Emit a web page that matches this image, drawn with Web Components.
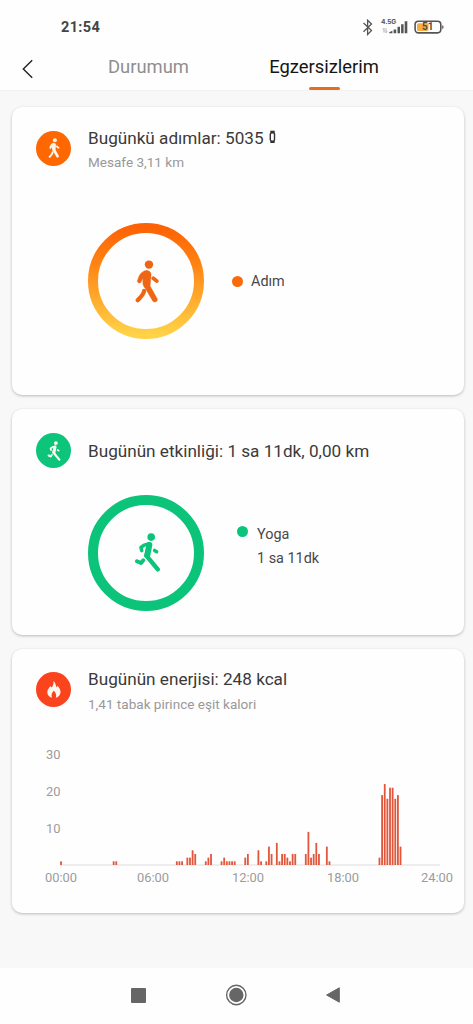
<!DOCTYPE html>
<html lang="tr">
<head>
<meta charset="utf-8">
<title>Egzersizlerim</title>
<style>
html,body{margin:0;height:100%;background:#f8f8f8}
body{font-family:Roboto,"Noto Sans",sans-serif;overflow:hidden}
</style>
</head>
<body>
<fit-app></fit-app>
<script>
const define = (name, html, setup) => customElements.define(name, class extends HTMLElement {
  constructor() {
    super();
    const t = document.createElement('template');
    t.innerHTML = html;
    this.attachShadow({mode: 'open'}).append(t.content.cloneNode(true));
  }
  connectedCallback() { if (setup) setup(this, this.shadowRoot); }
});

/* Activity figures, drawn in the current colour */
const FIGURES = {
  walk: `<svg viewBox="0 0 24 44" fill="none" stroke="currentColor" stroke-linecap="round" stroke-linejoin="round">
    <circle cx="14" cy="4.7" r="4.3" fill="currentColor" stroke="none"/>
    <path d="M11.5 10.8 C8.5 11 7 12.5 5 14.5 C3.8 16 3.3 18.5 2.2 21.2 C2 23.5 5 24.5 6 22.5 L7.7 18.5 L7.8 24 C8 26.5 9 27.5 10.5 29.5 L18 42.2 C19.5 44 23.5 42.4 22.6 39.8 L15.2 26.5 L16.2 15.5 C16.6 12.5 14 10.8 11.5 10.8Z" fill="currentColor" stroke="currentColor" stroke-width=".4"/>
    <path d="M18.4 18.7 L22.1 21.6" stroke-width="3.8"/>
    <path d="M9 31.5 C8.9 35 6.5 37 2.5 41.2" stroke-width="4.3" /></svg>`,
  run: `<svg viewBox="0 0 24 38" fill="none" stroke="currentColor" stroke-linecap="round" stroke-linejoin="round">
    <circle cx="15.6" cy="4" r="3.7" fill="currentColor" stroke="none"/>
    <path d="M14 11 L10.9 22 L22 35.4" stroke-width="4.3"/>
    <path d="M13.3 10.8 C10 11 8 11.7 5.6 14.2 L6.4 17.2" stroke-width="3.4"/>
    <path d="M13.8 11.6 L11.8 21.8" stroke-width="5.8"/>
    <path d="M18.9 17 L20.9 18.3" stroke-width="3.4"/>
    <path d="M1.7 27.5 L5.7 29.3 L7.9 26.5" stroke-width="3.8"/></svg>`,
  fire: `<svg viewBox="0 0 14 17"><path fill="currentColor" d="M6.5 0 C8.5 1.5 8.6 4 9.4 6.2 L10.6 4.8 C12.5 7 13.7 9 13.5 11.5 C13.2 14.5 11 16.3 8.8 16.7 C9.8 14.5 9 11.6 6.8 9.7 C4.8 11.5 3.9 14.5 5 16.7 C2.3 16 .3 14 .3 11.3 C.3 8.7 1.6 7.5 3.3 5.2 L4.8 6.6 C6.2 4.5 6.7 2.4 6.5 0Z"/></svg>`
};

define('fit-app', `
<style>
:host{display:flex;flex-direction:column;height:1024px;width:473px;background:#f8f8f8}
main{flex:1;display:flex;flex-direction:column;gap:14px;padding:16px 9px 0 12px}
</style>
<status-bar></status-bar>
<tab-bar></tab-bar>
<main>
  <info-card style="height:288px;--head:23.5px;--sub:6px" icon="walk" color="#ff6700">
    <span slot="title">Bugünkü adımlar: 5035</span><band-glyph slot="title"></band-glyph>
    <span slot="sub">Mesafe 3,11 km</span>
    <ring-chart figure="walk" style="--top:55px;color:#ee6513">
      <legend-item color="#fa6a0a" style="margin:2px 0 0 28px">Adım</legend-item>
    </ring-chart>
  </info-card>
  <info-card style="height:225.5px;--head:24px" icon="run" color="#0cc57a">
    <span slot="title">Bugünün etkinliği: 1 sa 11dk, 0,00 km</span>
    <ring-chart figure="run" style="--top:24.5px;color:#0bc47a">
      <legend-item color="#0bc47a" style="margin:-11px 0 0 33px">Yoga<span slot="value">1 sa 11dk</span></legend-item>
    </ring-chart>
  </info-card>
  <info-card style="height:264px;--head:23px;--sub:7px" icon="fire" color="#fb431e">
    <span slot="title">Bugünün enerjisi: 248 kcal</span>
    <span slot="sub">1,41 tabak pirince eşit kalori</span>
    <energy-chart></energy-chart>
  </info-card>
</main>
<nav-bar></nav-bar>`);

define('status-bar', `
<style>
:host{display:flex;justify-content:space-between;height:50px;background:#fefefe;padding:0 29px 0 61px;box-sizing:border-box}
time{font:700 14.5px/17px Roboto,sans-serif;color:#454545;letter-spacing:.35px;margin-top:19px}
.r{display:flex;align-items:flex-start;padding-top:19px}
svg{display:block}
.net{display:grid;margin:0 6px 0 7px;width:27px;height:16px}
.net>*{grid-area:1/1}
.net span{font:700 6.6px/7px Inter,Roboto,sans-serif;color:#555;white-space:nowrap;letter-spacing:-.1px}
.bat{display:grid;width:30px;height:16px}
.bat>*{grid-area:1/1}
.bat span{font:700 10px/16px Roboto,sans-serif;color:#564b3c;padding-left:8px;letter-spacing:-.1px}
</style>
<time>21:54</time>
<div class="r">
<svg width="12" height="17" viewBox="0 0 12 17" fill="none" stroke="#555" stroke-width="1.3"><path d="M1.5 4 L9.5 11.6 L5.6 15.5 V1.2 L9.5 5 L1.5 12.8"/></svg>
<div class="net"><svg width="27" height="16" viewBox="0 0 27 16"><path fill="#555" d="M8.2 14.3V13.2L11.4 11.7V14.3ZM12.6 14.3V10.5H15.2V14.3ZM16.5 14.3V7.8H19V14.3ZM20.1 14.3V5.2H22.6V14.3ZM23.7 14.3V2.3H26.3V14.3Z"/><path d="M3 9.3V13.5M1.8 10.6L3 9.3M5 9.3V13.7M6.2 12.4L5 13.7" stroke="#999" stroke-width=".8" fill="none"/></svg><span>4.5G</span></div>
<div class="bat"><svg width="30" height="16" viewBox="0 0 30 16"><rect x="1.1" y="2.3" width="25.7" height="11.6" rx="3.3" fill="#fff" stroke="#555" stroke-width="1.6"/><rect x="3" y="4.2" width="11.5" height="7.8" rx="1.5" fill="#f7ad43"/><path d="M28.2 6.3C30 6.5 30 9.7 28.2 10Z" fill="#555"/></svg><span>51</span></div>
</div>`);

define('tab-bar', `
<style>
:host{display:flex;height:41px;background:#fefefe;border-bottom:1px solid #f2f2f2;box-sizing:border-box;font-size:18.4px;line-height:22px;color:#8f8f8f}
svg{margin:9px 0 0 20px;width:16px;flex:none}
.a{margin:6px 0 0 72px;width:81px;white-space:nowrap}
.b{display:flex;flex-direction:column;align-items:center;margin:6px 0 0 80.5px;color:#151515;width:109px;white-space:nowrap}
i{width:31px;height:3px;border-radius:2px;background:#e76c20;margin-top:9px;flex:none}
</style>
<svg width="16" height="20" viewBox="0 0 16 20" fill="none" stroke="#222" stroke-width="1.4"><path d="M12.2 1.3 L3.3 10 L12.2 18.8"/></svg>
<span class="a">Durumum</span><span class="b"><span>Egzersizlerim</span><i></i></span>`);

define('info-card', `
<style>
:host{display:block;box-sizing:border-box;flex:none;background:#fefefe;border-radius:10px;box-shadow:0 1px 3px rgba(0,0,0,.25)}
header{display:flex;padding:var(--head) 0 0 24px;height:61px;box-sizing:border-box}
icon-disc{flex:none}
.t{margin-left:17px;color:#3a3a3a;white-space:nowrap}
.h{font-size:17.15px;line-height:20px;display:flex;align-items:center}
.s{font-size:13.55px;line-height:16px;color:#999;margin-top:var(--sub)}
</style>
<header><icon-disc></icon-disc><div class="t"><div class="h"><slot name="title"></slot></div><div class="s"><slot name="sub"></slot></div></div></header>
<slot></slot>`, (el, r) => {
  const d = r.querySelector('icon-disc');
  d.setAttribute('icon', el.getAttribute('icon'));
  d.style.background = el.getAttribute('color');
  const sub = el.querySelector('[slot=sub]');
  r.querySelector('.t').style.marginTop = sub ? '-3px' : '8px';
});

customElements.define('icon-disc', class extends HTMLElement {
  static observedAttributes = ['icon'];
  constructor() { super(); this.attachShadow({mode: 'open'}); }
  attributeChangedCallback(_, __, icon) {
    this.shadowRoot.innerHTML = `<style>
      :host{display:grid;place-items:center;width:35px;height:35px;border-radius:50%;color:#fff8ef}
      svg{display:block;width:14px;height:${icon === 'fire' ? 17 : 20}px}
    </style>${FIGURES[icon] || ''}`;
  }
});

define('band-glyph', `
<style>:host{display:block;margin:-2px 0 0 5px}svg{display:block}</style>
<svg width="7" height="14" viewBox="0 0 7 14"><path d="M1.3 .7H5.7V13H1.3Z" fill="#333"/><rect x=".6" y="2.6" width="5.6" height="8.6" rx="1.6" fill="#333"/><rect x="2" y="3.4" width="2.8" height="7" rx="1" fill="#fff"/></svg>`);

define('ring-chart', `
<style>
:host{display:flex;align-items:center;margin-left:76px;padding-top:var(--top);height:116px;width:max-content}
.ring{display:grid;width:116px;height:116px}
.ring>*{grid-area:1/1;display:block}
.fig{place-self:center}
.fig svg{display:block;width:100%;height:100%}
</style>
<div class="ring"><svg width="116" height="116" viewBox="0 0 116 116"><defs><linearGradient id="g" x1="0" y1="0" x2="0" y2="1" ><stop offset="0" stop-color="#fd6306"/><stop offset=".3" stop-color="#ff7f10"/><stop offset="1" stop-color="#ffd247"/></linearGradient></defs><circle cx="58" cy="58" r="53" fill="none" stroke-width="10"/></svg><div class="fig"></div></div>
<slot></slot>`, (el, r) => {
  const k = el.getAttribute('figure'), f = r.querySelector('.fig');
  r.querySelector('circle').setAttribute('stroke', k === 'walk' ? 'url(#g)' : 'currentColor');
  f.innerHTML = FIGURES[k];
  f.style.cssText = k === 'walk' ? 'width:24px;height:43px;margin:0 0 0 1px' : 'width:25px;height:39px;margin:0 0 0 3px';
});

define('legend-item', `
<style>
:host{display:flex;color:#484848;font-size:14.4px;line-height:24px}
i{width:11px;height:11px;border-radius:50%;margin:5.5px 8px 0 0;flex:none}
.v{display:block}
</style><i></i><div><slot></slot><div class="v"><slot name="value"></slot></div></div>`, (el, r) => {
  r.querySelector('i').style.background = el.getAttribute('color');
  if (el.querySelector('[slot=value]')) { r.querySelector('i').style.marginTop = '3px'; r.querySelector('i').style.marginRight = '9px'; }
  else r.querySelector('.v').style.display = 'none';
});

define('energy-chart', `
<style>
:host{display:block;color:#9c9c9c;font-size:12.9px;line-height:16px}
.plot{display:grid;grid-template-columns:48.5px 378px;height:155px}
.y{display:flex;flex-direction:column;padding:37px 0 0 0;gap:21px;text-align:right}
svg{display:block;overflow:visible}
.x{display:grid;grid-template-columns:92px 95px 95px 94px 34px;padding:5px 0 0 33px}
</style>
<div class="plot"><div class="y"><span>30</span><span>20</span><span>10</span></div><svg width="379" height="155"></svg></div>
<div class="x"><span>00:00</span><span>06:00</span><span>12:00</span><span>18:00</span><span>24:00</span></div>`, (el, r) => {
  /* kcal per ten-minute slot of the day */
  const runs = {0:[1],20:[1,1],44:[1,1,1],48:[2,2,4,3],55:[1,2,3],61:[1,2,1,1,1,1],70:[2,3],75:[4,1],78:[1,5,3],82:[6,1,3,3,2,1,3,3],93:[3,9,2,3,6,3],101:[5,1],121:[2,19,22,18,21,21,18,19,5]};
  let s = '<path d="M-1 155H379" stroke="#ddd" stroke-width="1"/>';
  for (const k in runs) runs[k].forEach((v, i) => {
    const h = v * 3.68;
    s += `<rect x="${((+k + i) * 2.632 - .9).toFixed(2)}" y="${(155 - h).toFixed(2)}" width="1.8" height="${h.toFixed(2)}" fill="#e2563b"/>`;
  });
  r.querySelector('svg').innerHTML = s;
});

define('nav-bar', `
<style>:host{display:block;height:56px;background:#fefefe;flex:none}
div{display:flex;align-items:center;justify-content:space-between;padding:16px 132px 0 131px}svg{display:block}</style>
<div>
<svg width="15" height="15"><rect width="15" height="15" rx="1" fill="#666"/></svg>
<svg width="22" height="22" viewBox="0 0 22 22"><circle cx="11.3" cy="11" r="9.7" fill="none" stroke="#666" stroke-width="1.4"/><circle cx="11.3" cy="11" r="7.2" fill="#666"/></svg>
<svg width="15" height="16" viewBox="0 0 15 16"><path d="M13.3 .8V15.2L.6 8Z" fill="#666" stroke="#666" stroke-linejoin="round"/></svg>
</div>`);
</script>
</body>
</html>
